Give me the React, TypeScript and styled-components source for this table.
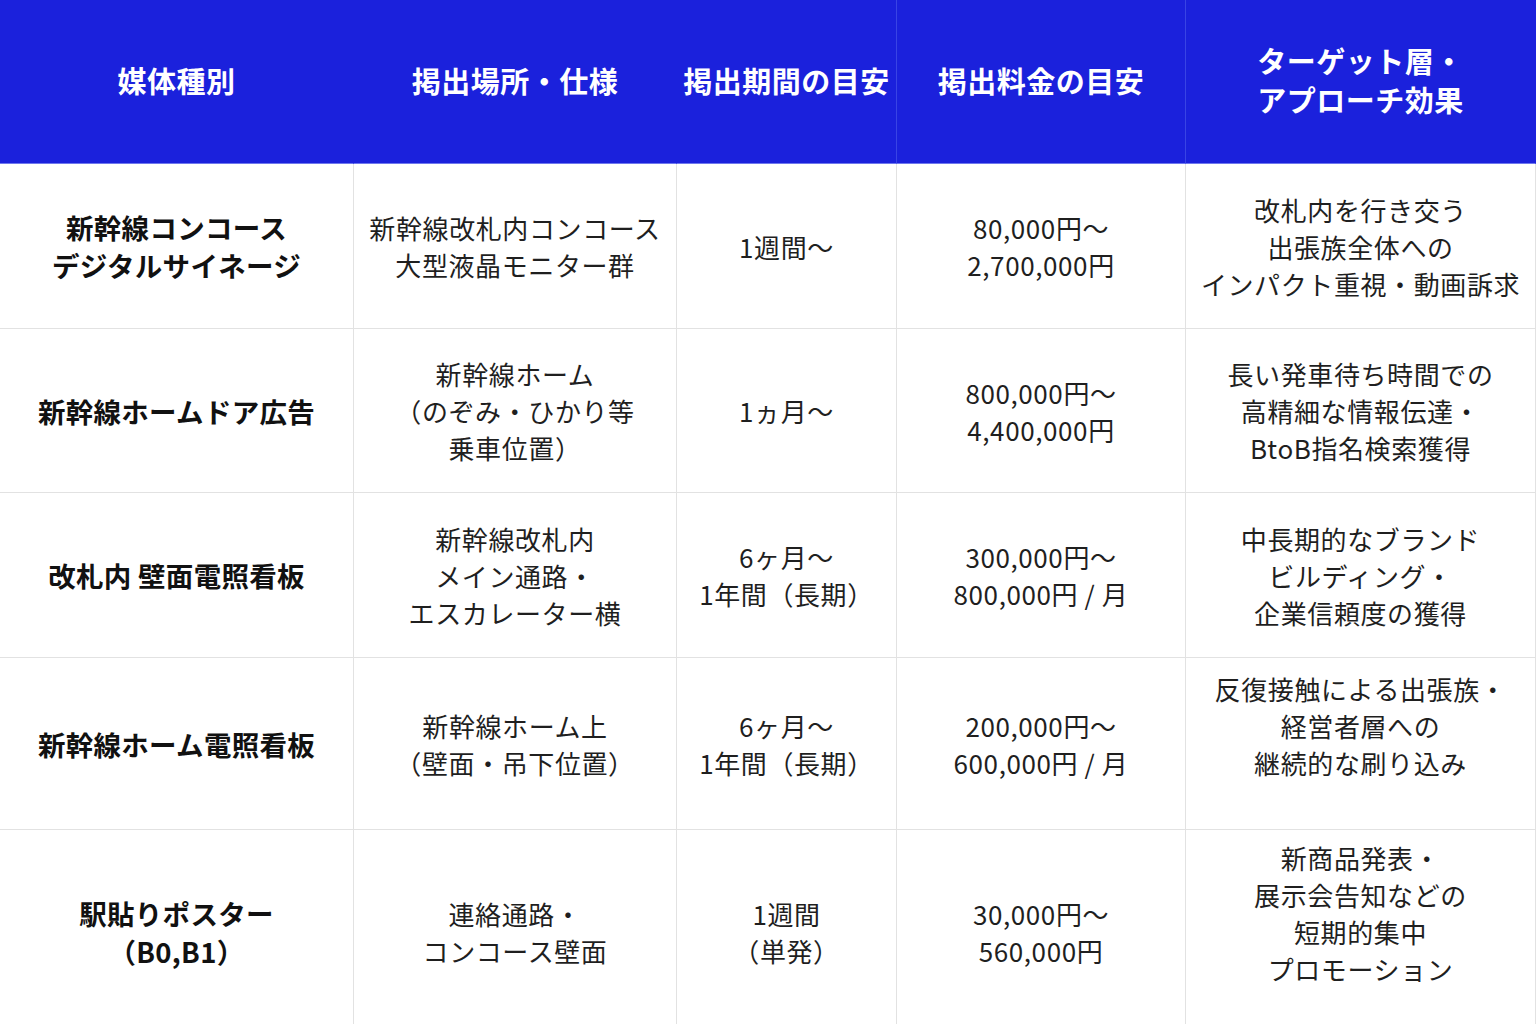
import React from "react";
import styled, { createGlobalStyle } from "styled-components";

const GlobalStyle = createGlobalStyle`
  html, body {
    margin: 0;
    padding: 0;
    background: #ffffff;
  }
  body {
    font-family: "Noto Sans CJK JP", "Noto Sans", sans-serif;
    color: #1a1a1a;
  }
`;

const headers = [
  ["媒体種別"],
  ["掲出場所・仕様"],
  ["掲出期間の目安"],
  ["掲出料金の目安"],
  ["ターゲット層・", "アプローチ効果"],
];

// each row: name, place, period, price, target (lines)
// a trailing "" keeps an empty line, as the original cells have
const rows: string[][][] = [
  [
    ["新幹線コンコース", "デジタルサイネージ"],
    ["新幹線改札内コンコース", "大型液晶モニター群"],
    ["1週間～"],
    ["80,000円～", "2,700,000円"],
    ["改札内を行き交う", "出張族全体への", "インパクト重視・動画訴求"],
  ],
  [
    ["新幹線ホームドア広告"],
    ["新幹線ホーム", "（のぞみ・ひかり等", "乗車位置）"],
    ["1ヵ月～"],
    ["800,000円～", "4,400,000円"],
    ["長い発車待ち時間での", "高精細な情報伝達・", "BtoB指名検索獲得"],
  ],
  [
    ["改札内 壁面電照看板"],
    ["新幹線改札内", "メイン通路・", "エスカレーター横"],
    ["6ヶ月～", "1年間（長期）"],
    ["300,000円～", "800,000円 / 月"],
    ["中長期的なブランド", "ビルディング・", "企業信頼度の獲得"],
  ],
  [
    ["新幹線ホーム電照看板"],
    ["新幹線ホーム上", "（壁面・吊下位置）"],
    ["6ヶ月～", "1年間（長期）"],
    ["200,000円～", "600,000円 / 月"],
    ["反復接触による出張族・", "経営者層への", "継続的な刷り込み", ""],
  ],
  [
    ["駅貼りポスター", "（B0,B1）"],
    ["連絡通路・", "コンコース壁面"],
    ["1週間", "（単発）"],
    ["30,000円～", "560,000円"],
    ["新商品発表・", "展示会告知などの", "短期的集中", "プロモーション", ""],
  ],
];

const Page = styled.div`
  width: 1536px;
  height: 1024px;
  overflow: hidden;
`;

const Table = styled.div`
  display: grid;
  grid-template-columns: 354px 323px 220px 289px 1fr;
  grid-template-rows: 164px 165px 164px 165px 172px 204px;
  width: 1536px;
`;

const HeadCell = styled.div<{ $divider: boolean }>`
  display: flex;
  flex-direction: column;
  align-items: center;
  justify-content: center;
  background: #1b21dc;
  color: #ffffff;
  font-size: 29px;
  font-weight: 700;
  line-height: 39px;
  letter-spacing: 0.5px;
  border-right: 1px solid ${(p) => (p.$divider ? "#3a44e4" : "#1b21dc")};
  border-bottom: 1px solid #6f78ee;
  padding-bottom: 3px;
`;

const Cell = styled.div<{ $bold: boolean }>`
  display: flex;
  flex-direction: column;
  align-items: center;
  justify-content: center;
  text-align: center;
  border-right: 1px solid #e2e2e2;
  border-bottom: 1px solid #e2e2e2;
  font-size: ${(p) => (p.$bold ? "27.5px" : "26px")};
  font-weight: ${(p) => (p.$bold ? 700 : 400)};
  letter-spacing: ${(p) => (p.$bold ? "0.3px" : "0.6px")};
  line-height: ${(p) => (p.$bold ? "38px" : "37px")};
  color: ${(p) => (p.$bold ? "#111111" : "#1f1f1f")};
  white-space: nowrap;
`;

const Line = styled.span`
  display: block;
  min-height: 1lh;
`;

const App: React.FC = () => {
  return (
    <Page>
      <GlobalStyle />
      <Table>
        {headers.map((lines, i) => (
          <HeadCell key={`h${i}`} $divider={i >= 2 && i < 4}>
            {lines.map((l) => (
              <Line key={l}>{l}</Line>
            ))}
          </HeadCell>
        ))}
        {rows.map((row, r) =>
          row.map((lines, c) => (
            <Cell key={`${r}-${c}`} $bold={c === 0}>
              {lines.map((l, k) => (
                <Line key={k}>{l || "\u00a0"}</Line>
              ))}
            </Cell>
          ))
        )}
      </Table>
    </Page>
  );
};

export default App;
